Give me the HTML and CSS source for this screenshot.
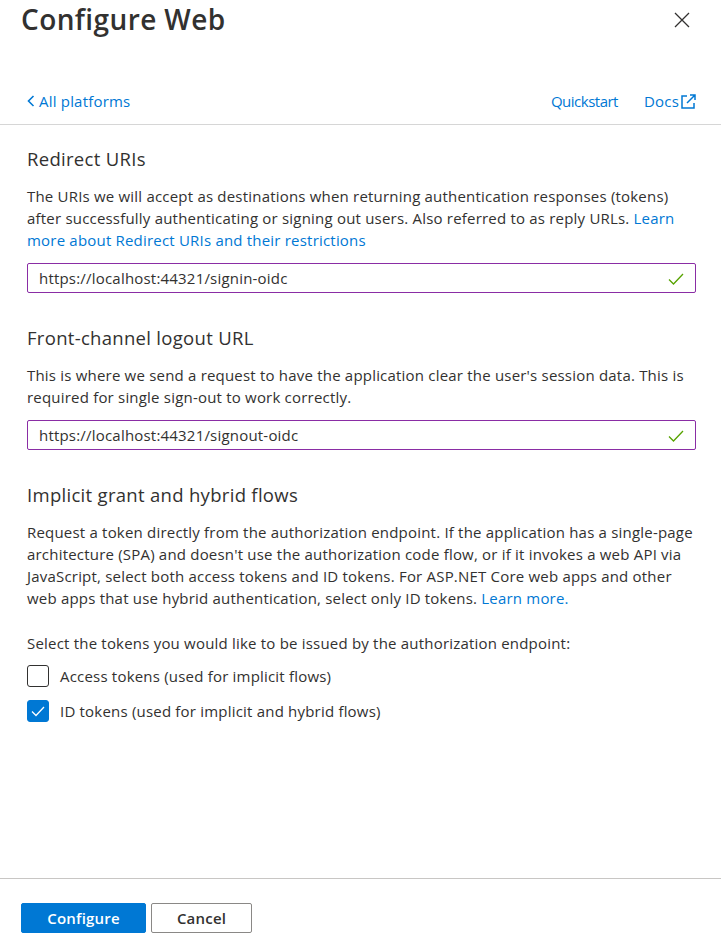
FILE: index.html
```html
<!DOCTYPE html>
<html lang="en">
<head>
<meta charset="utf-8">
<title>Configure Web</title>
<link rel="stylesheet" href="styles.css">
</head>
<body>
<div class="page">
  <header class="header">
    <h1 class="title">Configure Web</h1>
    <button class="close" aria-label="Close">
      <svg width="16" height="16" viewBox="0 0 16 16"><path d="M1 1L15 15M15 1L1 15" stroke="#323130" stroke-width="1.3" fill="none"/></svg>
    </button>
  </header>
  <nav class="navrow">
    <a class="link back" href="#">
      <svg width="8" height="12" viewBox="0 0 8 12"><path d="M6.5 1L1.5 6l5 5" stroke="#0078d4" stroke-width="1.6" fill="none"/></svg>
      All platforms
    </a>
    <div class="navright">
      <a class="link quick" href="#">Quickstart</a>
      <a class="link docs" href="#">Docs<svg width="17" height="17" viewBox="0 0 17 17"><path d="M7 3H2v12h12V10" stroke="#0078d4" stroke-width="1.5" fill="none"/><path d="M7 10L15 2M10 2h5v5" stroke="#0078d4" stroke-width="1.5" fill="none"/></svg></a>
    </div>
  </nav>
  <main class="content">
    <section class="section">
      <h2 class="heading">Redirect URIs</h2>
      <p class="text">The URIs we will accept as destinations when returning authentication responses (tokens) after successfully authenticating or signing out users. Also referred to as reply URLs. <a class="link" href="#">Learn more about Redirect URIs and their restrictions</a></p>
      <div class="field">
        <span class="value">https://localhost:44321/signin-oidc</span>
        <svg class="ok" width="16" height="12" viewBox="0 0 16 12"><path d="M1 6.5L5.5 11L15 1" stroke="#57a300" stroke-width="1.3" fill="none"/></svg>
      </div>
    </section>
    <section class="section">
      <h2 class="heading">Front-channel logout URL</h2>
      <p class="text">This is where we send a request to have the application clear the user's session data. This is required for single sign-out to work correctly.</p>
      <div class="field">
        <span class="value">https://localhost:44321/signout-oidc</span>
        <svg class="ok" width="16" height="12" viewBox="0 0 16 12"><path d="M1 6.5L5.5 11L15 1" stroke="#57a300" stroke-width="1.3" fill="none"/></svg>
      </div>
    </section>
    <section class="section">
      <h2 class="heading">Implicit grant and hybrid flows</h2>
      <p class="text">Request a token directly from the authorization endpoint. If the application has a single-page architecture (SPA) and doesn't use the authorization code flow, or if it invokes a web API via JavaScript, select both access tokens and ID tokens. For ASP.NET Core web apps and other web apps that use hybrid authentication, select only ID tokens. <a class="link" href="#">Learn more.</a></p>
      <p class="text select">Select the tokens you would like to be issued by the authorization endpoint:</p>
      <label class="check">
        <span class="box"></span>
        <span>Access tokens (used for implicit flows)</span>
      </label>
      <label class="check">
        <span class="box checked"><svg width="14" height="11" viewBox="0 0 14 11"><path d="M1 5.5L5 9.5L13 1" stroke="#fff" stroke-width="1.3" fill="none"/></svg></span>
        <span>ID tokens (used for implicit and hybrid flows)</span>
      </label>
    </section>
  </main>
  <footer class="footer">
    <button class="btn primary">Configure</button>
    <button class="btn secondary">Cancel</button>
  </footer>
</div>
</body>
</html>
```

FILE: styles.css
```css
* { box-sizing: border-box; }
html, body { margin: 0; padding: 0; }
body {
  font-family: "Open Sans", "Noto Sans", sans-serif;
  font-size: 15px;
  letter-spacing: 0.2px;
  color: #323130;
  background: #fff;
}
.page {
  display: flex;
  flex-direction: column;
  min-height: 938px;
}
.header {
  display: flex;
  justify-content: space-between;
  align-items: flex-start;
  padding: 1px 31px 0 21px;
}
.title {
  margin: 0;
  font-size: 28px;
  letter-spacing: 0.4px;
  line-height: 36px;
  font-weight: 600;
  color: #323130;
}
.close {
  border: 0;
  background: none;
  padding: 0;
  margin-top: 11px;
  width: 16px;
  height: 16px;
  display: flex;
}
.navrow {
  display: flex;
  justify-content: space-between;
  align-items: center;
  margin-top: 54px;
  padding: 0 24px 13px 27px;
  height: 34px;
  border-bottom: 1px solid #d6d6d6;
}
.link {
  color: #0078d4;
  text-decoration: none;
}
.back {
  display: flex;
  align-items: center;
  gap: 4px;
}
.navright {
  display: flex;
  gap: 26px;
  align-items: center;
}
.quick { letter-spacing: -0.5px; }
.docs {
  display: flex;
  align-items: center;
  gap: 1px;
}
.content {
  flex: 1;
  padding: 0 25px 0 27px;
}
.section { margin-top: 22px; }
.section + .section { margin-top: 33px; }
.heading {
  margin: 0;
  font-size: 18.5px;
  letter-spacing: 0.3px;
  line-height: 24px;
  font-weight: 400;
}
.text {
  margin: 14px 0 0;
  line-height: 22px;
}
.field {
  margin-top: 12px;
  height: 30px;
  border: 1px solid #8a2da5;
  border-radius: 2px;
  display: flex;
  align-items: center;
  justify-content: space-between;
  padding: 0 11px 0 11px;
}
.ok { margin-top: 1px; }
.text.select { margin-top: 23px; }
.check {
  display: flex;
  align-items: center;
  gap: 11px;
  margin-top: 11px;
  height: 22px;
}
.check + .check { margin-top: 13px; }
.box {
  width: 22px;
  height: 22px;
  border: 1px solid #323130;
  border-radius: 3px;
  display: flex;
  align-items: center;
  justify-content: center;
}
.box.checked {
  background: #0078d4;
  border-color: #0078d4;
}
.footer {
  border-top: 1px solid #c8c6c4;
  padding: 24px 21px 5px;
  display: flex;
  gap: 5px;
}
.btn {
  font-family: inherit;
  font-size: 15px;
  letter-spacing: 0.2px;
  font-weight: 600;
  height: 30px;
  border-radius: 2px;
  padding: 0;
}
.primary {
  width: 125px;
  background: #0078d4;
  border: 1px solid #0078d4;
  color: #fff;
}
.secondary {
  width: 101px;
  background: #fff;
  border: 1px solid #8a8886;
  color: #323130;
}
```
